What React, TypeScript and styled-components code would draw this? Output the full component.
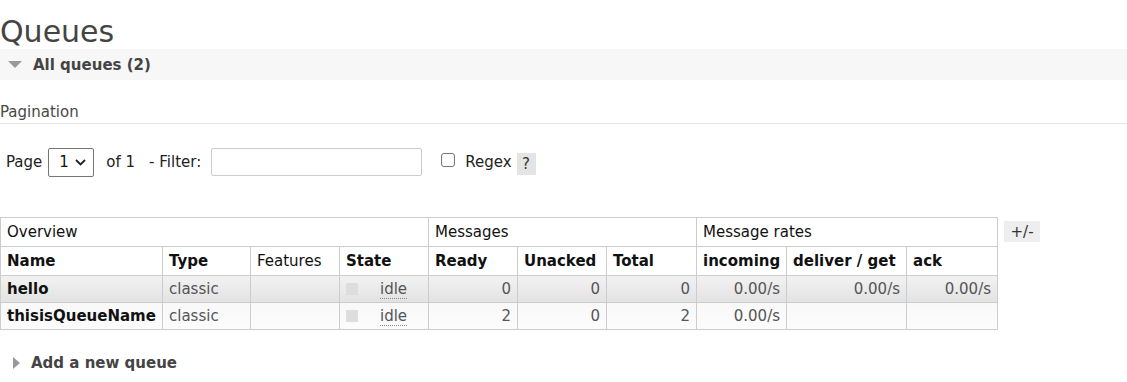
import React from 'react';
import styled, { createGlobalStyle } from 'styled-components';

const GlobalStyle = createGlobalStyle`
  body {
    margin: 0;
    background: #fff;
    font-family: "DejaVu Sans", Verdana, sans-serif;
    font-size: 15px;
    color: #484848;
  }
`;

const Page = styled.div`
  width: 1127px;
`;

const Title = styled.h1`
  margin: 0;
  padding-top: 14px;
  height: 35px;
  font-size: 30px;
  font-weight: normal;
  line-height: 35px;
  color: #444;
`;

const SectionBar = styled.div<{ $bg?: string }>`
  display: flex;
  align-items: center;
  gap: 11px;
  height: 31px;
  padding-left: 8px;
  background: ${p => p.$bg || 'transparent'};
  font-weight: bold;
  font-size: 15px;
  color: #444;
`;

const Triangle = styled.span<{ $dir: 'down' | 'right' }>`
  display: inline-block;
  width: 0;
  height: 0;
  ${p => p.$dir === 'down'
    ? `border-left: 7px solid transparent; border-right: 7px solid transparent; border-top: 7px solid #999;`
    : `border-top: 6px solid transparent; border-bottom: 6px solid transparent; border-left: 7px solid #999; margin-left: 5px;`}
`;

const SubHeading = styled.div`
  margin-top: 23px;
  padding-bottom: 1px;
  border-bottom: 1px solid #e4e4e4;
  color: #484848;
  line-height: 19px;
`;

const FilterRow = styled.div`
  display: flex;
  align-items: center;
  height: 30px;
  margin-top: 23px;
  padding-left: 6px;
  color: #222;
`;

const Select = styled.div`
  display: flex;
  align-items: center;
  justify-content: space-between;
  box-sizing: border-box;
  width: 46px;
  height: 29px;
  margin-left: 6px;
  padding: 0 7px 0 10px;
  border: 1px solid #767676;
  border-radius: 2px;
  font-size: 15px;
  color: #111;
`;

const Label = styled.span<{ $ml: number }>`
  margin-left: ${p => p.$ml}px;
`;

const TextInput = styled.div`
  box-sizing: border-box;
  width: 211px;
  height: 28px;
  margin-left: 10px;
  border: 1px solid #ccc;
  border-radius: 2px;
  background: #fff;
`;

const Checkbox = styled.div`
  box-sizing: border-box;
  width: 14px;
  height: 14px;
  margin-left: 19px;
  margin-top: -4px;
  border: 1px solid #767676;
  border-radius: 3px;
`;

const Help = styled.span`
  display: inline-flex;
  align-items: center;
  justify-content: center;
  width: 19px;
  height: 22px;
  margin-left: 5px;
  margin-top: 4px;
  background: #e4e4e4;
  color: #333;
`;

const TableWrap = styled.div`
  display: flex;
  align-items: flex-start;
  margin-top: 40px;
`;

const Table = styled.table`
  border-collapse: collapse;
  table-layout: fixed;
  width: 997px;
`;

const Cell = styled.td<{ $bold?: boolean; $right?: boolean; $dark?: boolean }>`
  border: 1px solid #ccc;
  padding: 0 6px;
  box-sizing: border-box;
  white-space: nowrap;
  overflow: hidden;
  font-weight: ${p => (p.$bold ? 'bold' : 'normal')};
  text-align: ${p => (p.$right ? 'right' : 'left')};
  color: ${p => (p.$dark ? '#111' : '#555')};
`;

const HeadRow = styled.tr`
  height: 29px;
  background: #fff;
  color: #222;
`;

const DataRow = styled.tr<{ $alt?: boolean }>`
  height: 27px;
  background: ${p => (p.$alt ? 'linear-gradient(#f8f8f8, #fcfcfc)' : 'linear-gradient(#f2f2f2, #e2e2e2)')};
`;

const StateBox = styled.span`
  display: inline-block;
  width: 12px;
  height: 12px;
  margin-right: 22px;
  vertical-align: -1px;
  background: #ddd;
`;

const Idle = styled.span`
  border-bottom: 1px dotted #888;
  color: #555;
`;

const Toggle = styled.div`
  margin-left: 6px;
  margin-top: 4px;
  width: 36px;
  height: 21px;
  display: flex;
  align-items: center;
  justify-content: center;
  background: #eee;
  color: #333;
`;

const AddSection = styled(SectionBar)`
  margin-top: 17px;
`;

const widths = [162, 88, 89, 89, 89, 89, 90, 90, 120, 91];

const rows = [
  { name: 'hello', ready: '0', unacked: '0', total: '0', rates: ['0.00/s', '0.00/s', '0.00/s'] },
  { name: 'thisisQueueName', ready: '2', unacked: '0', total: '2', rates: ['0.00/s', '', ''] },
];

export default function App() {
  return (
    <Page>
      <GlobalStyle />
      <Title>Queues</Title>
      <SectionBar $bg="#f7f7f7">
        <Triangle $dir="down" />
        <span>All queues (2)</span>
      </SectionBar>
      <SubHeading>Pagination</SubHeading>
      <FilterRow>
        <span>Page</span>
        <Select>
          <span>1</span>
          <svg width="11" height="7" viewBox="0 0 11 7">
            <path d="M1 1l4.5 4.5L10 1" fill="none" stroke="#222" strokeWidth="1.8" />
          </svg>
        </Select>
        <Label $ml={12}>of 1</Label>
        <Label $ml={14}>- Filter:</Label>
        <TextInput />
        <Checkbox />
        <Label $ml={10}>Regex</Label>
        <Help>?</Help>
      </FilterRow>
      <TableWrap>
        <Table>
          <colgroup>
            {widths.map((w, i) => <col key={i} style={{ width: w }} />)}
          </colgroup>
          <tbody>
            <HeadRow>
              <Cell colSpan={4} $dark>Overview</Cell>
              <Cell colSpan={3} $dark>Messages</Cell>
              <Cell colSpan={3} $dark>Message rates</Cell>
            </HeadRow>
            <HeadRow>
              <Cell $bold $dark>Name</Cell>
              <Cell $bold $dark>Type</Cell>
              <Cell $dark>Features</Cell>
              <Cell $bold $dark>State</Cell>
              <Cell $bold $dark>Ready</Cell>
              <Cell $bold $dark>Unacked</Cell>
              <Cell $bold $dark>Total</Cell>
              <Cell $bold $dark>incoming</Cell>
              <Cell $bold $dark>deliver / get</Cell>
              <Cell $bold $dark>ack</Cell>
            </HeadRow>
            {rows.map((r, i) => (
              <DataRow key={r.name} $alt={i % 2 === 1}>
                <Cell $bold $dark>{r.name}</Cell>
                <Cell>classic</Cell>
                <Cell />
                <Cell><StateBox /><Idle>idle</Idle></Cell>
                <Cell $right>{r.ready}</Cell>
                <Cell $right>{r.unacked}</Cell>
                <Cell $right>{r.total}</Cell>
                {r.rates.map((v, j) => <Cell key={j} $right>{v}</Cell>)}
              </DataRow>
            ))}
          </tbody>
        </Table>
        <Toggle>+/-</Toggle>
      </TableWrap>
      <AddSection>
        <Triangle $dir="right" />
        <span>Add a new queue</span>
      </AddSection>
    </Page>
  );
}
